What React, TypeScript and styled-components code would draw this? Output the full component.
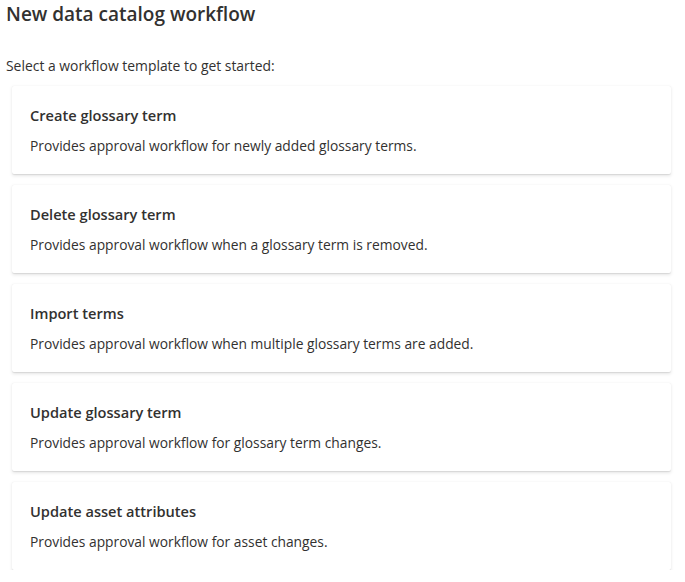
import * as React from 'react';
import styled, { createGlobalStyle } from 'styled-components';

const text = '#323130';

const templates = [
  {
    title: 'Create glossary term',
    description: 'Provides approval workflow for newly added glossary terms.',
  },
  {
    title: 'Delete glossary term',
    description: 'Provides approval workflow when a glossary term is removed.',
  },
  {
    title: 'Import terms',
    description:
      'Provides approval workflow when multiple glossary terms are added.',
  },
  {
    title: 'Update glossary term',
    description: 'Provides approval workflow for glossary term changes.',
  },
  {
    title: 'Update asset attributes',
    description: 'Provides approval workflow for asset changes.',
  },
];

const GlobalStyle = createGlobalStyle`
  body {
    margin: 0;
    background: #ffffff;
    font-family: 'Segoe UI', 'Open Sans', 'Noto Sans', sans-serif;
    color: ${text};
  }
`;

const Page = styled.div`
  padding: 0 14px 0 6px;
`;

const Title = styled.h1`
  margin: 0;
  padding-top: 1px;
  font-size: 19px;
  line-height: 26px;
  font-weight: 600;
`;

const Intro = styled.p`
  margin: 29px 0 10px;
  font-size: 13.9px;
  line-height: 20px;
`;

const CardList = styled.ul`
  list-style: none;
  margin: 0;
  padding: 0 0 0 6px;
  display: flex;
  flex-direction: column;
  gap: 11px;
`;

const Card = styled.li`
  height: 88px;
  box-sizing: border-box;
  padding: 18px 18px 0;
  background: #ffffff;
  border-radius: 2px;
  box-shadow: 0 1.6px 3.6px rgba(0, 0, 0, 0.1), 0 0.3px 0.9px rgba(0, 0, 0, 0.08);
`;

const CardTitle = styled.div`
  font-size: 14.6px;
  line-height: 22px;
  font-weight: 600;
`;

const CardText = styled.div`
  margin-top: 10px;
  font-size: 13.8px;
  line-height: 20px;
`;

export default function App() {
  return (
    <Page>
      <GlobalStyle />
      <Title>New data catalog workflow</Title>
      <Intro>Select a workflow template to get started:</Intro>
      <CardList>
        {templates.map((t) => (
          <Card key={t.title}>
            <CardTitle>{t.title}</CardTitle>
            <CardText>{t.description}</CardText>
          </Card>
        ))}
      </CardList>
    </Page>
  );
}
